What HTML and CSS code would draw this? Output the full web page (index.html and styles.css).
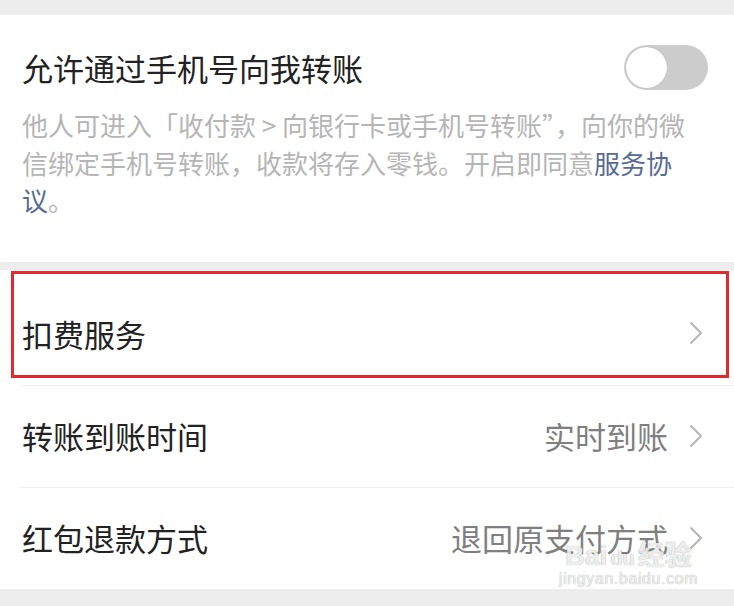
FILE: index.html
```html
<!DOCTYPE html>
<html lang="zh-CN">
<head>
    <meta charset="UTF-8">
    <meta name="viewport" content="width=device-width, initial-scale=1.0">
    <title>支付设置</title>
    <link rel="stylesheet" href="styles.css">
</head>
<body>
    <div class="page">
        <div class="card">
            <div class="switch-row">
                <span class="title">允许通过手机号向我转账</span>
                <span class="toggle"><span class="knob"></span></span>
            </div>
            <p class="desc">他人可进入「收付款 &gt; 向银行卡或手机号转账”，向你的微信绑定手机号转账，收款将存入零钱。开启即同意<a class="link">服务协议</a>。</p>
        </div>

        <div class="list">
            <div class="row row-first">
                <span class="label">扣费服务</span>
                <span class="value">
                    <svg class="arrow" width="14" height="24" viewBox="0 0 14 24"><polyline points="1.5,1.5 12,12 1.5,22.5" fill="none" stroke="#b5b5b5" stroke-width="2"/></svg>
                </span>
                <span class="mark"></span>
            </div>
            <div class="row">
                <span class="label">转账到账时间</span>
                <span class="value">实时到账
                    <svg class="arrow" width="14" height="24" viewBox="0 0 14 24"><polyline points="1.5,1.5 12,12 1.5,22.5" fill="none" stroke="#b5b5b5" stroke-width="2"/></svg>
                </span>
            </div>
            <div class="row">
                <span class="label">红包退款方式</span>
                <span class="value">退回原支付方式
                    <svg class="arrow" width="14" height="24" viewBox="0 0 14 24"><polyline points="1.5,1.5 12,12 1.5,22.5" fill="none" stroke="#b5b5b5" stroke-width="2"/></svg>
                </span>
                <span class="watermark">
                    <span class="wm-logo">Bai<span class="wm-du">du</span>经验</span>
                    <span class="wm-url">jingyan.baidu.com</span>
                </span>
            </div>
        </div>
    </div>
</body>
</html>
```

FILE: styles.css
```css
body {
    margin: 0;
    padding: 0;
    background: #ededed;
    font-family: 'Noto Sans CJK SC', 'Noto Sans', sans-serif;
    color: #222;
}

.page {
    padding-top: 15px;
}

/* Top card with the switch */
.card {
    background: #fff;
    padding: 30px 40px 43px 22px;
}

.switch-row {
    display: flex;
    justify-content: space-between;
    align-items: center;
    height: 45px;
    margin-right: -14px;
}

.title {
    font-size: 31px;
    line-height: 45px;
    color: #222;
}

.toggle {
    display: flex;
    align-items: center;
    width: 84px;
    height: 45px;
    border-radius: 23px;
    background: #cccccc;
    padding: 0 2px;
    box-sizing: border-box;
}

.knob {
    width: 41px;
    height: 41px;
    border-radius: 50%;
    background: #fff;
    box-shadow: 0 0 1px rgba(0, 0, 0, 0.25);
}

.desc {
    margin: 16px 0 0;
    font-size: 26px;
    line-height: 37.5px;
    color: #b5b5b5;
}

.link {
    color: #576b95;
}

/* List rows */
.list {
    margin-top: 8px;
    background: #fff;
}

.row {
    position: relative;
    display: flex;
    justify-content: space-between;
    align-items: center;
    height: 102px;
    padding: 0 31px 0 22px;
    box-sizing: border-box;
}

.row + .row::before {
    content: '';
    position: absolute;
    top: 0;
    left: 20px;
    right: 0;
    height: 1px;
    background: #efefef;
}

.row-first {
    height: 115px;
    padding-top: 12px;
}

.label {
    font-size: 31px;
    color: #222;
}

.value {
    display: flex;
    align-items: center;
    gap: 21px;
    font-size: 31px;
    color: #7f7f7f;
}

.arrow {
    display: block;
}

/* Red annotation box */
.mark {
    position: absolute;
    top: 1px;
    left: 11px;
    width: 718px;
    height: 107px;
    border: 3px solid #e02a2e;
    box-sizing: border-box;
}

/* Image watermark */
.watermark {
    position: absolute;
    left: 559px;
    top: 57px;
    display: flex;
    flex-direction: column;
    align-items: center;
    color: rgba(255, 255, 255, 0.85);
    text-shadow: 0 0 1px rgba(0, 0, 0, 0.45);
    font-family: 'Liberation Sans', 'Noto Sans CJK SC', sans-serif;
}

.wm-logo {
    font-size: 27px;
    line-height: 24px;
    font-weight: bold;
}

.wm-du {
    font-size: 20px;
    margin: 0 3px;
}

.wm-url {
    font-size: 16px;
    line-height: 18px;
    letter-spacing: 0.6px;
}
```
